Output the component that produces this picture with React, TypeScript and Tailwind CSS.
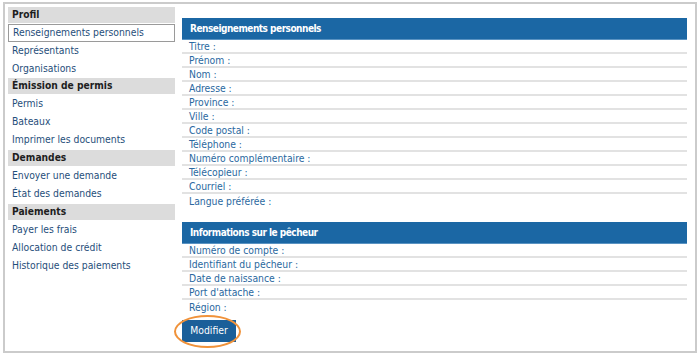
import React from 'react';

type NavGroup = { title: string; items: string[] };

const nav: NavGroup[] = [
  { title: 'Profil', items: ['Renseignements personnels', 'Représentants', 'Organisations'] },
  { title: 'Émission de permis', items: ['Permis', 'Bateaux', 'Imprimer les documents'] },
  { title: 'Demandes', items: ['Envoyer une demande', 'État des demandes'] },
  { title: 'Paiements', items: ['Payer les frais', 'Allocation de crédit', 'Historique des paiements'] },
];

const personal = [
  'Titre :',
  'Prénom :',
  'Nom :',
  'Adresse :',
  'Province :',
  'Ville :',
  'Code postal :',
  'Téléphone :',
  'Numéro complémentaire :',
  'Télécopieur :',
  'Courriel :',
  'Langue préférée :',
];

const fisher = ['Numéro de compte :', 'Identifiant du pêcheur :', 'Date de naissance :', "Port d'attache :", 'Région :'];

const font = { fontFamily: '"DejaVu Sans Condensed", "DejaVu Sans", Verdana, sans-serif' };

const Section: React.FC<{ title: string; rows: string[] }> = ({ title, rows }) => (
  <div>
    <div className="h-[22px] bg-[#1b67a4] text-white font-bold text-[10px] tracking-[-0.5px] flex items-center pl-[8px] border-b border-[#5a93c2]">
      {title}
    </div>
    {rows.map((r, i) => (
      <div
        key={r}
        className={`h-[14px] flex items-center pl-[7px] text-[10.3px] text-[#2a68a0] leading-none ${
          i < rows.length - 1 ? 'border-b-2 border-[#e2e2e2]' : ''
        }`}
      >
        {r}
      </div>
    ))}
  </div>
);

export default function App() {
  return (
    <div className="w-[700px] h-[357px] bg-white" style={font}>
      <div className="ml-[3px] mt-[2px] w-[694px] h-[351px] border-2 border-[#cbcbcb] flex gap-[7px] pl-[3px] pr-[8px] pt-[3px]">
        {/* Sidebar */}
        <div className="w-[167px] shrink-0">
          {nav.map((g, gi) => (
            <div key={g.title}>
              <div
                className={`h-[16px] bg-[#dcdcdc] text-[#1e1e1e] font-bold text-[10.2px] flex items-center pl-[4px] mb-px ${
                  gi >= 2 ? 'mt-px' : ''
                }`}
              >
                {g.title}
              </div>
              {g.items.map((it) => (
                <div
                  key={it}
                  className={`h-[18px] flex items-center pl-[4px] text-[10.3px] text-[#1f4e7a] ${
                    it === 'Renseignements personnels' ? 'border border-[#9a9a9a] pl-[3px]' : ''
                  }`}
                >
                  {it}
                </div>
              ))}
            </div>
          ))}
        </div>

        {/* Main */}
        <div className="flex-1 pt-[11px]">
          <Section title="Renseignements personnels" rows={personal} />
          <div className="mt-[14px]">
            <Section title="Informations sur le pêcheur" rows={fisher} />
          </div>
          <div className="relative mt-[6px] w-[54px]">
            <button className="h-[22px] w-[54px] bg-[#1b5f99] text-white text-[10.3px] flex items-center justify-center">
              Modifier
            </button>
            <div className="absolute left-[-8px] top-[-5px] w-[67px] h-[33px] rounded-[50%] border-2 border-[#f0923a]" />
          </div>
        </div>
      </div>
    </div>
  );
}
